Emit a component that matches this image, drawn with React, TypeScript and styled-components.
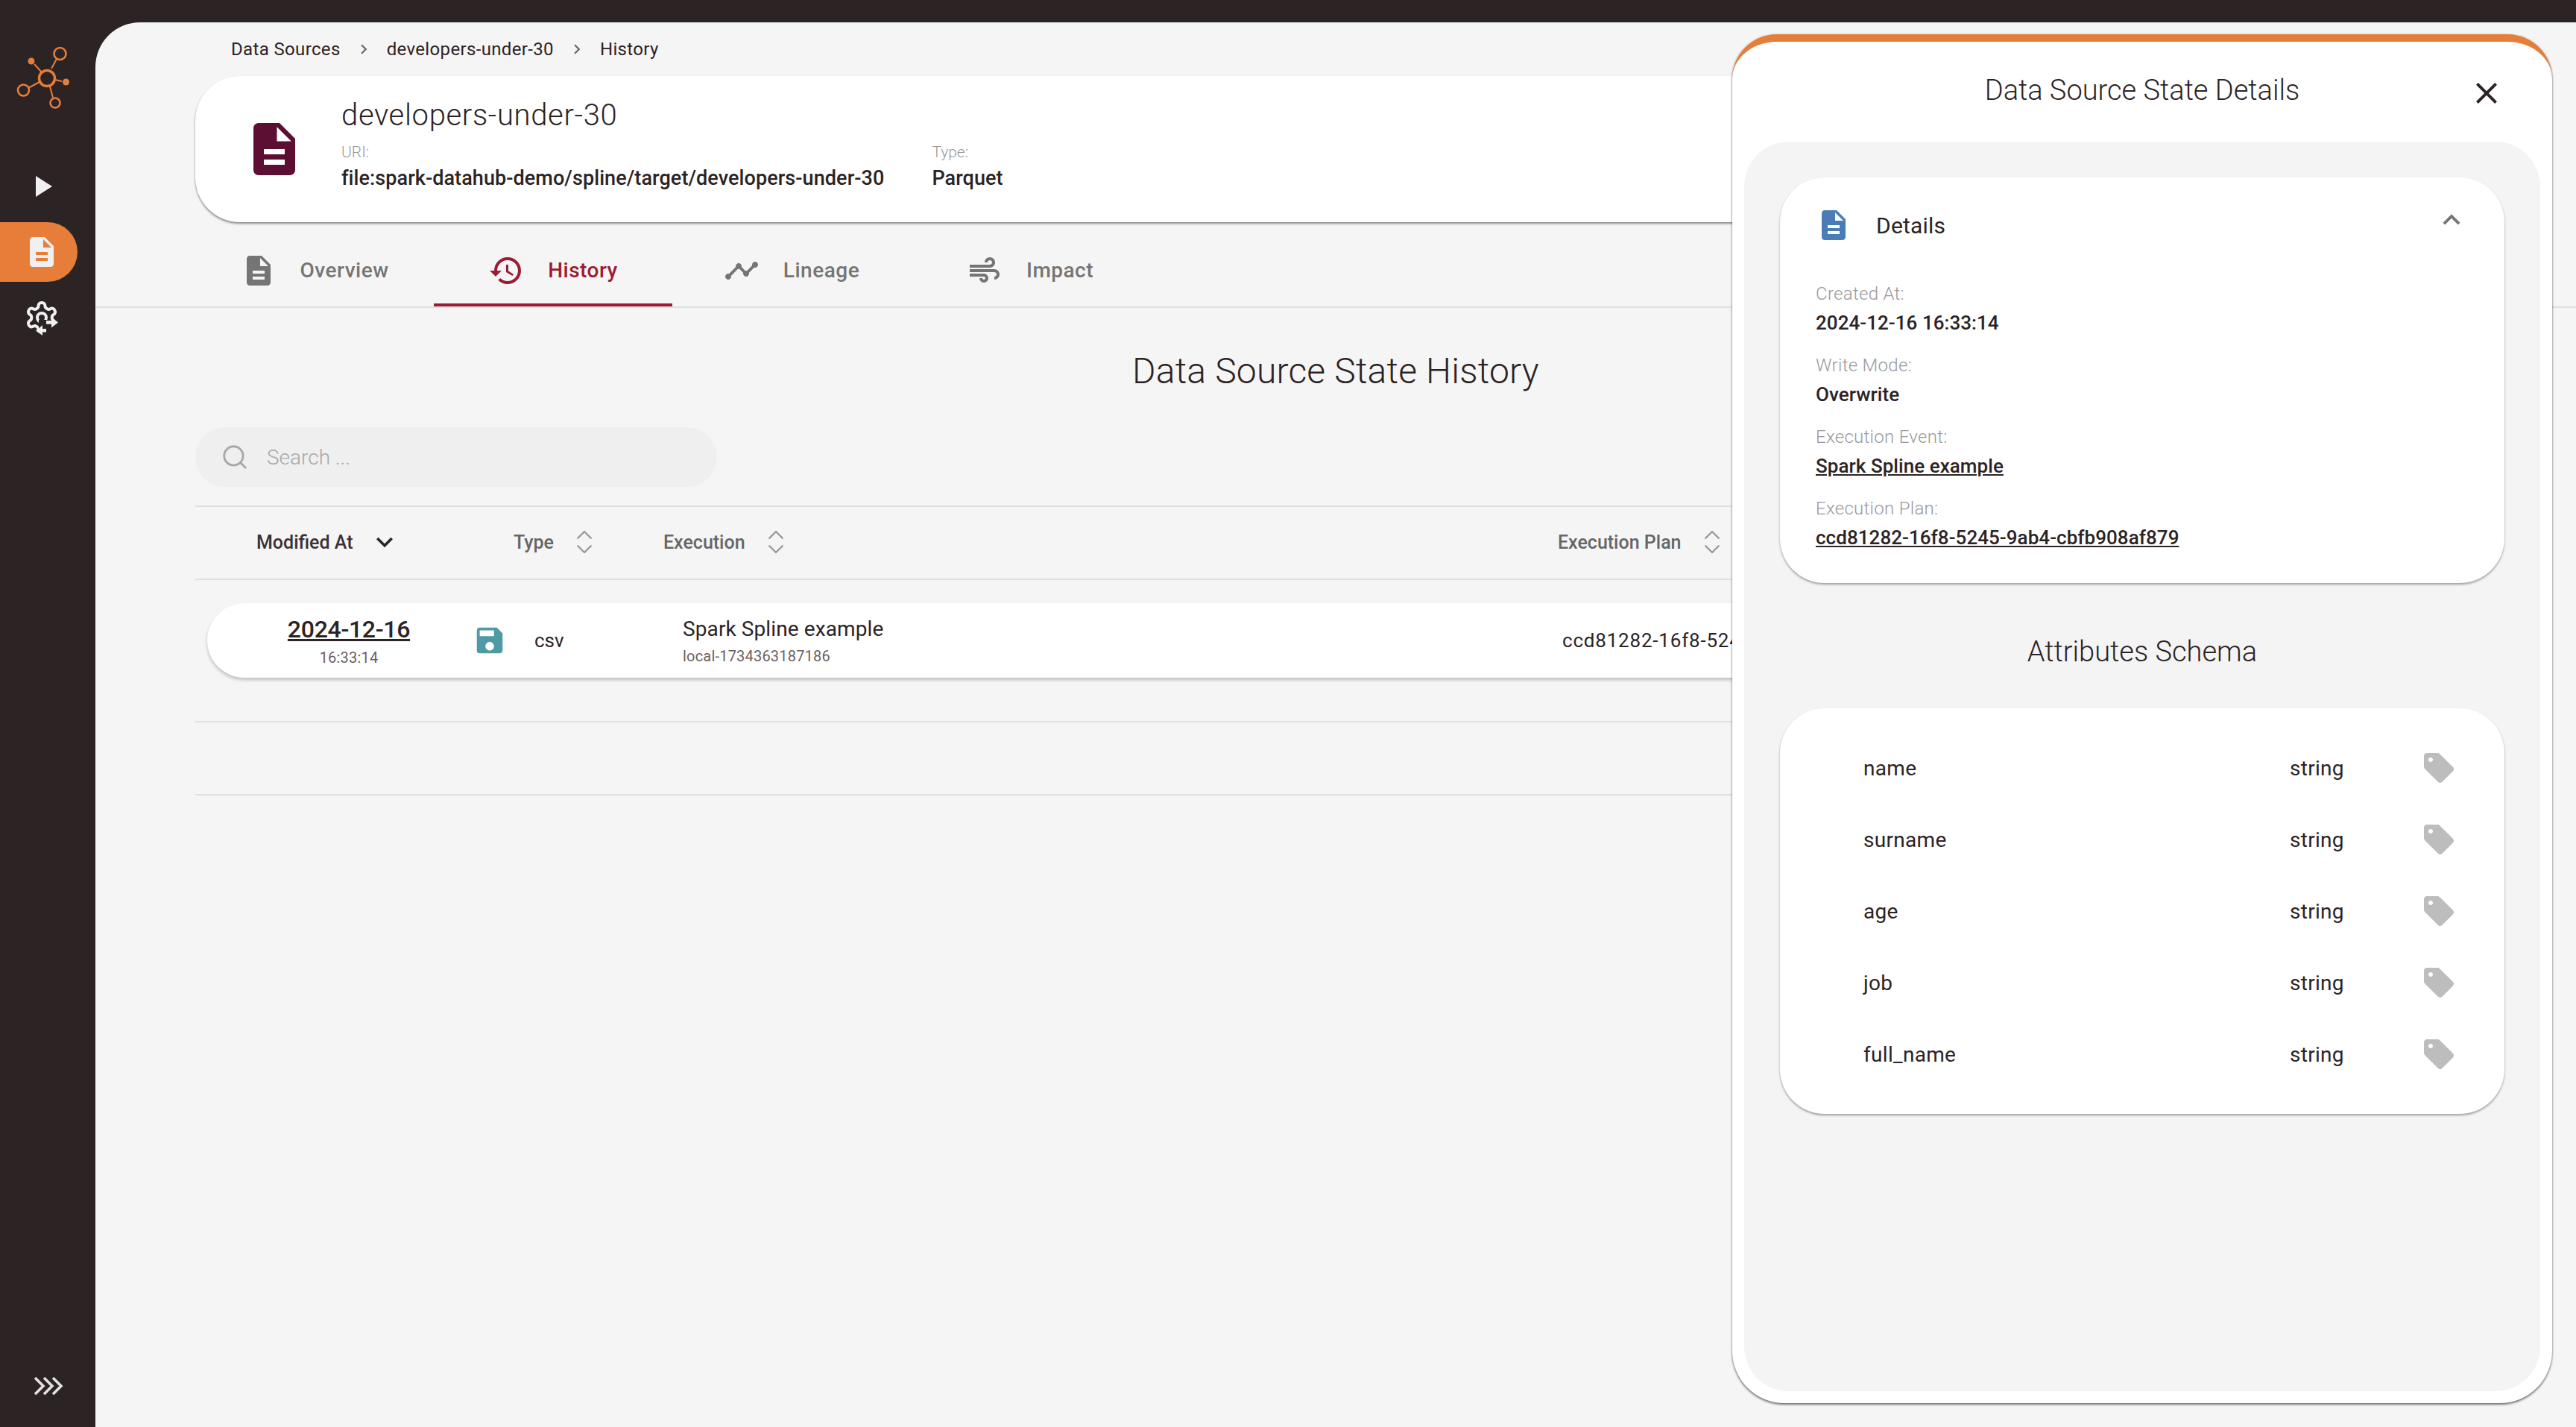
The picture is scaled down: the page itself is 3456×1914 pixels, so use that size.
import React from "react";
import styled, { createGlobalStyle } from "styled-components";
import { ChevronsUpDown, Search } from "lucide-react";
import {
  MdAir,
  MdClose,
  MdDescription,
  MdExpandLess,
  MdExpandMore,
  MdHistory,
  MdPlayArrow,
  MdSave,
  MdSell,
  MdTimeline,
} from "react-icons/md";

const INK = "#2c2325";
const ORANGE = "#e67e3a";

const GlobalStyle = createGlobalStyle`
  html, body {
    margin: 0;
    padding: 0;
    background: ${INK};
    font-family: "Roboto", "Noto Sans", sans-serif;
    color: ${INK};
  }
  * { box-sizing: border-box; }
`;

const Shell = styled.div`
  display: flex;
  width: 3456px;
  height: 1914px;
  padding-top: 30px;
  background: ${INK};
  overflow: hidden;
`;

const Sidebar = styled.nav`
  position: relative;
  width: 128px;
  flex: none;
  display: flex;
  flex-direction: column;
  padding-top: 26px;
`;

const LogoWrap = styled.div`
  height: 154px;
  padding-left: 20px;
`;

const NavItem = styled.div<{ $active?: boolean }>`
  width: 104px;
  height: 80px;
  display: flex;
  align-items: center;
  padding-left: 32px;
  color: #f0f0f0;
  border-radius: 0 40px 40px 0;
  background: ${(p) => (p.$active ? ORANGE : "transparent")};
  margin-bottom: 8px;
  svg { flex: none; }
`;

const SidebarFoot = styled.div`
  margin-top: auto;
  height: 68px;
  padding-left: 45px;
`;

const Main = styled.main`
  position: relative;
  flex: 1;
  min-width: 0;
  background: #f5f5f5;
  border-top-left-radius: 60px;
  overflow: hidden;
`;

const Breadcrumbs = styled.div`
  height: 72px;
  padding-left: 182px;
  display: flex;
  align-items: center;
  font-size: 24px;
  letter-spacing: 0.35px;
  svg { color: #6d6363; margin: 0 18px; }
`;

const HeaderCard = styled.section`
  height: 196px;
  margin: 0 130px 0 134px;
  padding-left: 64px;
  display: flex;
  align-items: center;
  gap: 48px;
  background: #fff;
  border-radius: 60px;
  box-shadow: 0 2px 3px rgba(0, 0, 0, 0.45);
  color: #5c0f33;
`;

const HeaderText = styled.div`
  display: flex;
  flex-direction: column;
  padding: 2px 0 15px;
  color: ${INK};
`;

const SourceName = styled.h1`
  margin: 0 0 12px;
  font-size: 40px;
  line-height: 50px;
  font-weight: 300;
  letter-spacing: 0.65px;
`;

const MetaRow = styled.div`
  display: flex;
  gap: 64px;
`;

const MetaItem = styled.div`
  display: flex;
  flex-direction: column;
`;

const MetaLabel = styled.span`
  font-size: 21px;
  line-height: 24px;
  color: #999;
  font-weight: 300;
`;

const MetaValue = styled.span`
  font-size: 27px;
  line-height: 36px;
  margin-top: 5px;
  font-weight: 500;
  letter-spacing: 0.08px;
`;

const Tabs = styled.div`
  margin-top: 15px;
  padding-left: 134px;
  display: flex;
  height: 100px;
  border-bottom: 2px solid #e0e0e0;
`;

const Tab = styled.div<{ $active?: boolean }>`
  width: 320px;
  height: 98px;
  padding-top: 5px;
  display: flex;
  align-items: center;
  justify-content: center;
  gap: 32px;
  font-size: 28px;
  letter-spacing: 0.5px;
  font-weight: 500;
  color: ${(p) => (p.$active ? "#9b1c31" : "#757575")};
  border-bottom: 4px solid ${(p) => (p.$active ? "#9b1c31" : "transparent")};
`;

const PageTitle = styled.h2`
  margin: 55px 0 45px;
  font-size: 48px;
  line-height: 60px;
  font-weight: 300;
  letter-spacing: 0.2px;
  text-align: center;
`;

const Content = styled.div`
  margin: 0 130px 0 134px;
`;

const SearchBox = styled.div`
  width: 700px;
  height: 80px;
  border-radius: 40px;
  background: #efefef;
  display: flex;
  align-items: center;
  padding-left: 34px;
  gap: 24px;
  font-size: 28px;
  color: #a8a8a8;
  font-weight: 300;
`;

const HeadRow = styled.div`
  margin-top: 25px;
  height: 100px;
  display: flex;
  align-items: center;
  padding: 0 0 2px 82px;
  border-top: 2px solid #e0e0e0;
  border-bottom: 2px solid #e0e0e0;
`;

const HeadCell = styled.div<{ $w: number; $sorted?: boolean }>`
  width: ${(p) => p.$w}px;
  flex: none;
  display: flex;
  align-items: center;
  gap: 20px;
  font-size: 25px;
  font-weight: 500;
  color: ${(p) => (p.$sorted ? "#3a3235" : "#666")};
  svg { color: ${(p) => (p.$sorted ? INK : "#999")}; }
`;

const BodyBlock = styled.div`
  height: 191px;
  padding: 31px 0 0 16px;
  border-bottom: 2px solid #e0e0e0;
`;

const EmptyBlock = styled.div`
  height: 98px;
  border-bottom: 2px solid #e0e0e0;
`;

const Row = styled.div`
  height: 100px;
  display: flex;
  align-items: center;
  padding-left: 100px;
  background: #fff;
  border-radius: 50px;
  box-shadow: 0 3px 4px rgba(0, 0, 0, 0.22);
`;

const DateCell = styled.div`
  width: 180px;
  flex: none;
  text-align: center;
`;

const DateLink = styled.a`
  display: block;
  font-size: 32px;
  line-height: 42px;
  font-weight: 500;
  text-decoration: underline;
  letter-spacing: -0.3px;
`;

const Small = styled.div`
  font-size: 20px;
  line-height: 28px;
  letter-spacing: 0.2px;
  color: #6d5f5f;
  margin-top: 3px;
`;

const TypeCell = styled.div`
  width: 282px;
  margin-left: 76px;
  flex: none;
  display: flex;
  align-items: center;
  gap: 37px;
  font-size: 26px;
  color: #4f9aa5;
  span { color: ${INK}; }
`;

const ExecCell = styled.div`
  width: 1178px;
  flex: none;
  font-size: 28px;
  line-height: 38px;
  letter-spacing: 0.1px;
`;

const PlanCell = styled.div`
  margin-left: 2px;
  font-size: 26px;
  letter-spacing: 0.8px;
  white-space: nowrap;
`;

const Drawer = styled.aside`
  position: absolute;
  top: 16px;
  left: 2196px;
  width: 1100px;
  height: 1836px;
  display: flex;
  flex-direction: column;
  background: #fff;
  border-top: 10px solid ${ORANGE};
  border-radius: 60px 60px 70px 70px;
  box-shadow: 0 2px 3px rgba(0, 0, 0, 0.5), 0 0 3px rgba(0, 0, 0, 0.2);
`;

const DrawerHead = styled.header`
  position: relative;
  height: 134px;
  flex: none;
  padding-top: 40px;
  text-align: center;
  font-size: 38px;
  line-height: 50px;
  font-weight: 300;
`;

const CloseButton = styled.button`
  position: absolute;
  top: 45px;
  right: 64px;
  width: 48px;
  height: 48px;
  padding: 0;
  border: 0;
  background: none;
  color: ${INK};
`;

const DrawerPanel = styled.div`
  flex: 1;
  margin: 0 16px 16px;
  padding: 48px;
  background: #f4f4f4;
  border-radius: 60px;
`;

const Card = styled.section`
  background: #fff;
  border-radius: 60px;
  box-shadow: 0 2px 3px rgba(0, 0, 0, 0.35);
`;

const DetailsCard = styled(Card)`
  height: 544px;
  padding: 40px 48px 0;
`;

const DetailsHead = styled.div`
  display: flex;
  align-items: center;
  gap: 33px;
  font-size: 30px;
  letter-spacing: 0.2px;
  color: #4a7db8;
  span { color: ${INK}; flex: 1; font-weight: 400; }
`;

const Collapse = styled.div`
  margin: -14px 0 0;
  color: #757575;
  height: 46px;
`;

const DetailsBody = styled.div`
  margin-top: 51px;
  display: flex;
  flex-direction: column;
  gap: 22px;
`;

const Field = styled.div`
  display: flex;
  flex-direction: column;
  gap: 4px;
`;

const FieldLabel = styled.span`
  font-size: 24px;
  line-height: 34px;
  letter-spacing: 0.3px;
  color: #999;
  font-weight: 300;
`;

const FieldValue = styled.span<{ $link?: boolean }>`
  font-size: 26px;
  line-height: 36px;
  font-weight: 500;
  letter-spacing: 0.05px;
  text-decoration: ${(p) => (p.$link ? "underline" : "none")};
`;

const SchemaTitle = styled.h3`
  margin: 62px 0 46px;
  font-size: 38px;
  line-height: 60px;
  font-weight: 300;
  text-align: center;
`;

const SchemaCard = styled(Card)`
  height: 544px;
  padding: 32px 0 0 112px;
`;

const SchemaRow = styled.div`
  height: 96px;
  display: grid;
  grid-template-columns: 572px 176px 48px;
  align-items: center;
  font-size: 28px;
  letter-spacing: 0.3px;
  svg { color: #bdbdbd; display: block; }
`;

const attributes = ["name", "surname", "age", "job", "full_name"];

const details = [
  { label: "Created At:", value: "2024-12-16 16:33:14" },
  { label: "Write Mode:", value: "Overwrite" },
  { label: "Execution Event:", value: "Spark Spline example", link: true },
  { label: "Execution Plan:", value: "ccd81282-16f8-5245-9ab4-cbfb908af879", link: true },
];

function Logo() {
  return (
    <svg width="80" height="92" viewBox="20 56 80 92" fill="none" stroke={ORANGE}>
      <circle cx="63" cy="105" r="10.5" strokeWidth="3.5" />
      <circle cx="80.5" cy="72" r="8" strokeWidth="2.6" />
      <circle cx="31.5" cy="121" r="7.5" strokeWidth="2.6" />
      <circle cx="74" cy="138" r="6.5" strokeWidth="2.6" />
      <circle cx="42" cy="82" r="4.5" fill={ORANGE} stroke="none" />
      <circle cx="88.5" cy="110" r="4.5" fill={ORANGE} stroke="none" />
      <path d="M69 92l7-13M56 97L46 86M74 107l9 2M67 116l4 15M53 110l-15 8" strokeWidth="2" />
    </svg>
  );
}

function GearSwap() {
  return (
    <svg width="48" height="48" viewBox="0 0 24 24" fill="none">
      <path
        d="M12.22 2h-.44a2 2 0 0 0-2 2v.18a2 2 0 0 1-1 1.73l-.43.25a2 2 0 0 1-2 0l-.15-.08a2 2 0 0 0-2.73.73l-.22.38a2 2 0 0 0 .73 2.73l.15.1a2 2 0 0 1 1 1.72v.51a2 2 0 0 1-1 1.74l-.15.09a2 2 0 0 0-.73 2.73l.22.38a2 2 0 0 0 2.73.73l.15-.08a2 2 0 0 1 2 0l.43.25a2 2 0 0 1 1 1.73V20a2 2 0 0 0 2 2h.44a2 2 0 0 0 2-2v-.18a2 2 0 0 1 1-1.73l.43-.25a2 2 0 0 1 2 0l.15.08a2 2 0 0 0 2.73-.73l.22-.39a2 2 0 0 0-.73-2.73l-.15-.08a2 2 0 0 1-1-1.74v-.5a2 2 0 0 1 1-1.74l.15-.09a2 2 0 0 0 .73-2.73l-.22-.38a2 2 0 0 0-2.73-.73l-.15.08a2 2 0 0 1-2 0l-.43-.25a2 2 0 0 1-1-1.73V4a2 2 0 0 0-2-2z"
        stroke="#f0f0f0"
        strokeWidth="2"
      />
      <circle cx="12" cy="12" r="3" stroke="#f0f0f0" strokeWidth="2" />
      <rect x="10" y="13.5" width="15" height="11" fill={INK} />
      <path d="M15 14h3.5v-2.4l4.5 3.6-4.5 3.6V16.4H15zM15 19.5h-2.5v-2.4L8 20.7l4.5 3.3v-2.2H15z" fill="#f0f0f0" />
    </svg>
  );
}

function TripleChevron() {
  return (
    <svg width="40" height="26" viewBox="0 0 40 26" fill="none" stroke="#e2e2e2" strokeWidth="3.6">
      <path d="M2 2l11 11L2 24M14 2l11 11-11 11M26 2l11 11-11 11" />
    </svg>
  );
}

function Slash() {
  return <MdExpandMore size={26} style={{ transform: "rotate(-90deg)" }} />;
}

export default function App() {
  return (
    <Shell>
      <GlobalStyle />
      <Sidebar>
        <LogoWrap>
          <Logo />
        </LogoWrap>
        <NavItem>
          <MdPlayArrow size={48} />
        </NavItem>
        <NavItem $active>
          <MdDescription size={48} />
        </NavItem>
        <NavItem>
          <GearSwap />
        </NavItem>
        <SidebarFoot>
          <TripleChevron />
        </SidebarFoot>
      </Sidebar>

      <Main>
        <Breadcrumbs>
          Data Sources
          <Slash />
          developers-under-30
          <Slash />
          History
        </Breadcrumbs>

        <HeaderCard>
          <MdDescription size={84} />
          <HeaderText>
            <SourceName>developers-under-30</SourceName>
            <MetaRow>
              <MetaItem>
                <MetaLabel>URI:</MetaLabel>
                <MetaValue>file:spark-datahub-demo/spline/target/developers-under-30</MetaValue>
              </MetaItem>
              <MetaItem>
                <MetaLabel>Type:</MetaLabel>
                <MetaValue>Parquet</MetaValue>
              </MetaItem>
            </MetaRow>
          </HeaderText>
        </HeaderCard>

        <Tabs>
          <Tab>
            <MdDescription size={48} />
            Overview
          </Tab>
          <Tab $active>
            <MdHistory size={48} />
            History
          </Tab>
          <Tab>
            <MdTimeline size={48} />
            Lineage
          </Tab>
          <Tab>
            <MdAir size={48} />
            Impact
          </Tab>
        </Tabs>

        <PageTitle>Data Source State History</PageTitle>

        <Content>
          <SearchBox>
            <Search size={38} strokeWidth={1.8} color="#a8a8a8" />
            Search ...
          </SearchBox>

          <HeadRow>
            <HeadCell $w={345} $sorted>
              Modified At
              <MdExpandMore size={44} />
            </HeadCell>
            <HeadCell $w={201}>
              Type
              <ChevronsUpDown size={42} strokeWidth={1.4} />
            </HeadCell>
            <HeadCell $w={1200}>
              Execution
              <ChevronsUpDown size={42} strokeWidth={1.4} />
            </HeadCell>
            <HeadCell $w={300}>
              Execution Plan
              <ChevronsUpDown size={42} strokeWidth={1.4} />
            </HeadCell>
          </HeadRow>

          <BodyBlock>
            <Row>
              <DateCell>
                <DateLink>2024-12-16</DateLink>
                <Small>16:33:14</Small>
              </DateCell>
              <TypeCell>
                <MdSave size={46} />
                <span>csv</span>
              </TypeCell>
              <ExecCell>
                Spark Spline example
                <Small>local-1734363187186</Small>
              </ExecCell>
              <PlanCell>ccd81282-16f8-5245-9ab4-cbfb908af879</PlanCell>
            </Row>
          </BodyBlock>
          <EmptyBlock />
        </Content>

        <Drawer>
          <DrawerHead>
            Data Source State Details
            <CloseButton>
              <MdClose size={48} />
            </CloseButton>
          </DrawerHead>
          <DrawerPanel>
            <DetailsCard>
              <DetailsHead>
                <MdDescription size={48} />
                <span>Details</span>
                <Collapse>
                  <MdExpandLess size={46} />
                </Collapse>
              </DetailsHead>
              <DetailsBody>
                {details.map((d) => (
                  <Field key={d.label}>
                    <FieldLabel>{d.label}</FieldLabel>
                    <FieldValue $link={d.link}>{d.value}</FieldValue>
                  </Field>
                ))}
              </DetailsBody>
            </DetailsCard>

            <SchemaTitle>Attributes Schema</SchemaTitle>

            <SchemaCard>
              {attributes.map((name) => (
                <SchemaRow key={name}>
                  <span>{name}</span>
                  <span>string</span>
                  <MdSell size={48} />
                </SchemaRow>
              ))}
            </SchemaCard>
          </DrawerPanel>
        </Drawer>
      </Main>
    </Shell>
  );
}
